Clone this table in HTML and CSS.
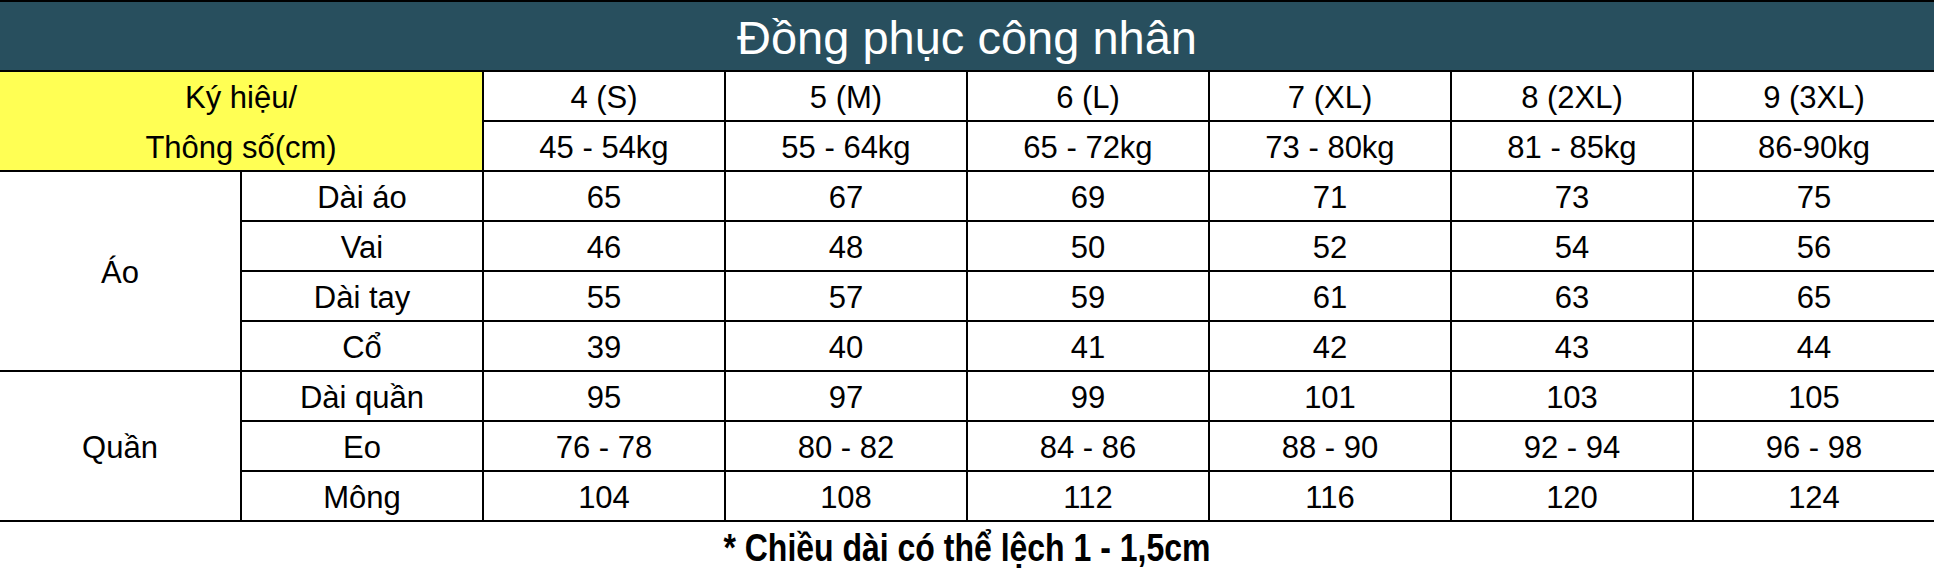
FILE: index.html
```html
<!DOCTYPE html>
<html lang="vi">
<head>
<meta charset="utf-8">
<title>Đồng phục công nhân</title>
<link rel="stylesheet" href="styles.css">
</head>
<body>
<div class="sheet">
  <div class="grid">
    <div class="title">Đồng phục công nhân</div>

    <div class="cell label">Ký hiệu/<br>Thông số(cm)</div>
    <div class="cell">4 (S)</div>
    <div class="cell">5 (M)</div>
    <div class="cell">6 (L)</div>
    <div class="cell">7 (XL)</div>
    <div class="cell">8 (2XL)</div>
    <div class="cell">9 (3XL)</div>
    <div class="cell">45 - 54kg</div>
    <div class="cell">55 - 64kg</div>
    <div class="cell">65 - 72kg</div>
    <div class="cell">73 - 80kg</div>
    <div class="cell">81 - 85kg</div>
    <div class="cell">86-90kg</div>

    <div class="cell group group-ao">Áo</div>
    <div class="cell">Dài áo</div>
    <div class="cell">65</div><div class="cell">67</div><div class="cell">69</div><div class="cell">71</div><div class="cell">73</div><div class="cell">75</div>
    <div class="cell">Vai</div>
    <div class="cell">46</div><div class="cell">48</div><div class="cell">50</div><div class="cell">52</div><div class="cell">54</div><div class="cell">56</div>
    <div class="cell">Dài tay</div>
    <div class="cell">55</div><div class="cell">57</div><div class="cell">59</div><div class="cell">61</div><div class="cell">63</div><div class="cell">65</div>
    <div class="cell">Cổ</div>
    <div class="cell">39</div><div class="cell">40</div><div class="cell">41</div><div class="cell">42</div><div class="cell">43</div><div class="cell">44</div>

    <div class="cell group group-quan">Quần</div>
    <div class="cell">Dài quần</div>
    <div class="cell">95</div><div class="cell">97</div><div class="cell">99</div><div class="cell">101</div><div class="cell">103</div><div class="cell">105</div>
    <div class="cell">Eo</div>
    <div class="cell">76 - 78</div><div class="cell">80 - 82</div><div class="cell">84 - 86</div><div class="cell">88 - 90</div><div class="cell">92 - 94</div><div class="cell">96 - 98</div>
    <div class="cell">Mông</div>
    <div class="cell">104</div><div class="cell">108</div><div class="cell">112</div><div class="cell">116</div><div class="cell">120</div><div class="cell">124</div>
  </div>
  <div class="note"><span class="note-text">* Chiều dài có thể lệch 1 - 1,5cm</span></div>
</div>
</body>
</html>
```

FILE: styles.css
```css
html, body {
  margin: 0;
  padding: 0;
  background: #ffffff;
}

.sheet {
  width: 1934px;
  font-family: "Liberation Sans", Arial, sans-serif;
  color: #000000;
}

.grid {
  display: grid;
  grid-template-columns: repeat(8, 240px);
  grid-template-rows: 68px 48px 48px repeat(7, 48px);
  gap: 2px;
  background: #000000;
  border-top: 2px solid #000000;
  border-bottom: 2px solid #000000;
}

.title {
  grid-column: 1 / -1;
  background: #284f5e;
  color: #ffffff;
  font-size: 47px;
  display: flex;
  align-items: center;
  justify-content: center;
  padding-top: 2px;
  box-sizing: border-box;
}

.cell {
  background: #ffffff;
  font-size: 31px;
  display: flex;
  align-items: center;
  justify-content: center;
  text-align: center;
  padding-top: 3px;
  box-sizing: border-box;
}

.label {
  grid-column: 1 / span 2;
  grid-row: span 2;
  background: #ffff54;
  line-height: 50px;
}

.group {
  grid-column: 1;
}

.group-ao {
  grid-row: span 4;
}

.group-quan {
  grid-row: span 3;
}

.note {
  height: 52px;
  display: flex;
  align-items: center;
  justify-content: center;
  font-weight: bold;
  font-size: 39px;
  box-sizing: border-box;
}

.note-text {
  display: inline-block;
  white-space: nowrap;
  transform: scaleX(0.82);
}
```
